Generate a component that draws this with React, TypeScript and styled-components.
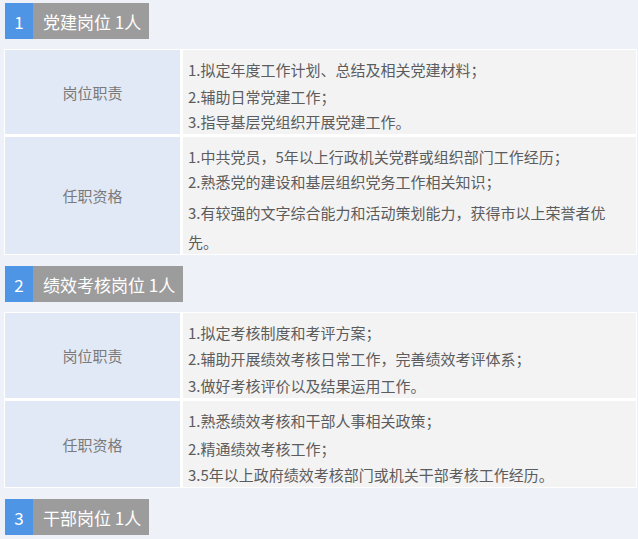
import { createGlobalStyle, styled } from "styled-components";

const GlobalStyle = createGlobalStyle`
  html, body {
    margin: 0;
    padding: 0;
    background: #eef2f8;
  }
  body {
    font-family: "Noto Sans CJK SC", "Noto Sans", sans-serif;
  }
`;

const Page = styled.div`
  width: 638px;
  height: 539px;
  overflow: hidden;
  padding: 3px 1px 0 4px;
  box-sizing: border-box;
  background: #eef2f8;
`;

const Section = styled.section`
  display: flex;
  flex-direction: column;
  align-items: flex-start;
  margin-bottom: 11px;
`;

const Tag = styled.div`
  display: flex;
  align-items: stretch;
  height: 36px;
  margin-left: 1px;
  background: #9c9c9c;
`;

const Num = styled.span`
  width: 28px;
  display: flex;
  align-items: center;
  justify-content: center;
  background: #4e95e6;
  color: #fff;
  font-size: 17px;
`;

const Title = styled.span`
  display: flex;
  align-items: center;
  padding: 0 8px 0 10px;
  color: #fff;
  font-size: 17px;
  white-space: pre;
`;

const Table = styled.div`
  align-self: stretch;
  margin-top: 10px;
  background: #fff;
  padding: 1px;
  display: flex;
  flex-direction: column;
  gap: 3px;
`;

const Row = styled.div`
  display: grid;
  grid-template-columns: 175px 1fr;
  gap: 3px;
`;

const Label = styled.div`
  background: #e2e9f6;
  display: flex;
  align-items: center;
  justify-content: center;
  color: #7a7a7a;
  font-size: 15px;
`;

const Content = styled.div`
  background: #f3f3f4;
  padding: 8px 6px 0 5px;
  color: #5c5c5c;
  font-size: 15px;
`;

const Line = styled.p<{ $gap?: number }>`
  margin: ${(p) => p.$gap ?? 0}px 0 0;
  line-height: 24px;
  white-space: nowrap;
`;

type Item = { text: string; gap?: number };
type Job = {
  num: string;
  title: string;
  rows: { label: string; lines: Item[] }[];
};

const jobs: Job[] = [
  {
    num: "1",
    title: "党建岗位 1人",
    rows: [
      {
        label: "岗位职责",
        lines: [
          { text: "1.拟定年度工作计划、总结及相关党建材料；" },
          { text: "2.辅助日常党建工作；", gap: 3 },
          { text: "3.指导基层党组织开展党建工作。", gap: 1 },
        ],
      },
      {
        label: "任职资格",
        lines: [
          { text: "1.中共党员，5年以上行政机关党群或组织部门工作经历；" },
          { text: "2.熟悉党的建设和基层组织党务工作相关知识；", gap: 1 },
          { text: "3.有较强的文字综合能力和活动策划能力，获得市以上荣誉者优", gap: 7 },
          { text: "先。", gap: 5 },
        ],
      },
    ],
  },
  {
    num: "2",
    title: "绩效考核岗位 1人",
    rows: [
      {
        label: "岗位职责",
        lines: [
          { text: "1.拟定考核制度和考评方案；" },
          { text: "2.辅助开展绩效考核日常工作，完善绩效考评体系；", gap: 2 },
          { text: "3.做好考核评价以及结果运用工作。", gap: 3 },
        ],
      },
      {
        label: "任职资格",
        lines: [
          { text: "1.熟悉绩效考核和干部人事相关政策；" },
          { text: "2.精通绩效考核工作；", gap: 4 },
          { text: "3.5年以上政府绩效考核部门或机关干部考核工作经历。", gap: 2 },
        ],
      },
    ],
  },
];

export default function App() {
  return (
    <>
      <GlobalStyle />
      <Page>
        {jobs.map((job) => (
          <Section key={job.num}>
            <Tag>
              <Num>{job.num}</Num>
              <Title>{job.title}</Title>
            </Tag>
            <Table>
              {job.rows.map((row) => (
                <Row key={row.label}>
                  <Label>{row.label}</Label>
                  <Content>
                    {row.lines.map((l) => (
                      <Line key={l.text} $gap={l.gap}>
                        {l.text}
                      </Line>
                    ))}
                  </Content>
                </Row>
              ))}
            </Table>
          </Section>
        ))}
        <Section>
          <Tag>
            <Num>3</Num>
            <Title>干部岗位 1人</Title>
          </Tag>
        </Section>
      </Page>
    </>
  );
}
